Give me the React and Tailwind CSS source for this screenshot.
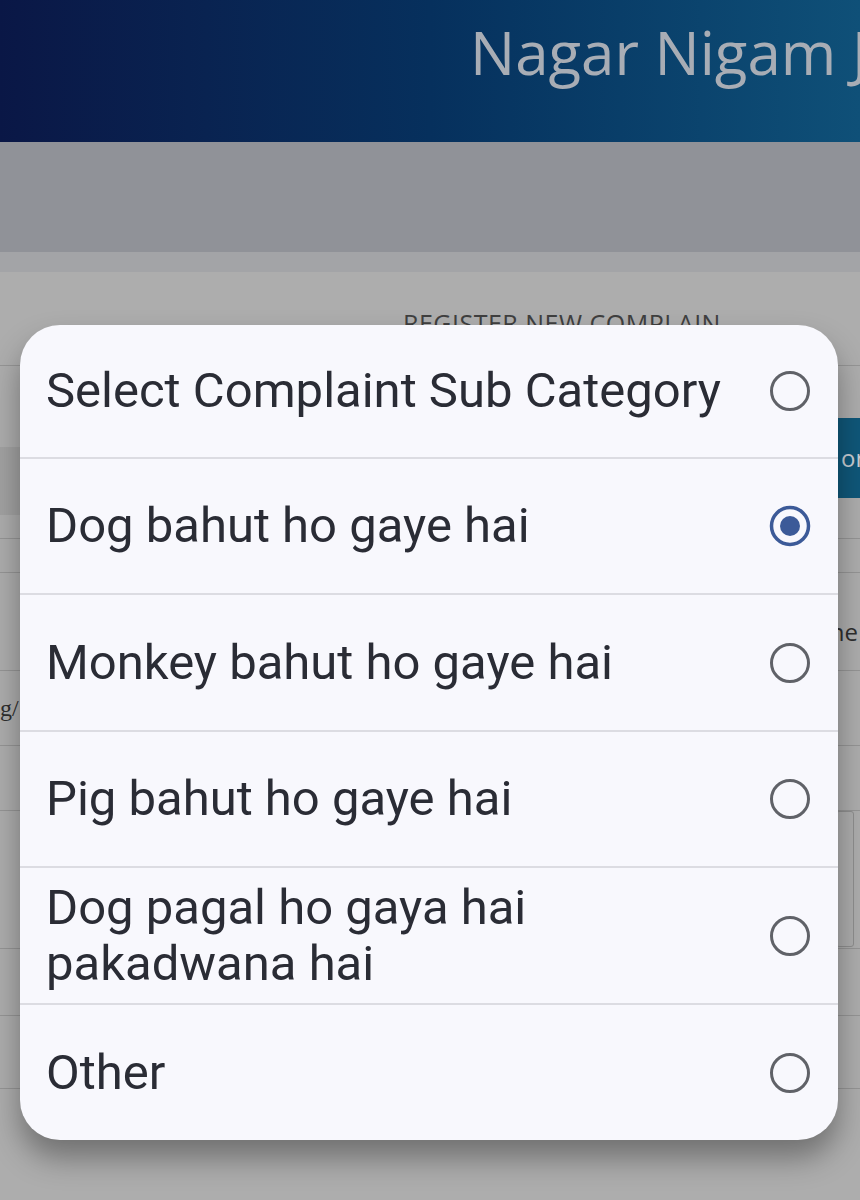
import React from 'react';

const options = [
  { label: 'Select Complaint Sub Category', h: 'h-[134px]' },
  { label: 'Dog bahut ho gaye hai', h: 'h-[136px]', checked: true },
  { label: 'Monkey bahut ho gaye hai', h: 'h-[137px]' },
  { label: 'Pig bahut ho gaye hai', h: 'h-[136px]' },
  { label: 'Dog pagal ho gaya hai pakadwana hai', h: 'h-[137px]' },
  { label: 'Other', h: 'h-[135px]' },
];

const Radio = ({ checked }) =>
  checked ? (
    <svg width="44" height="44" viewBox="0 0 44 44" className="shrink-0">
      <circle cx="22" cy="22" r="18.5" fill="none" stroke="#3c5a98" strokeWidth="3.5" />
      <circle cx="22" cy="22" r="10" fill="#3c5a98" />
    </svg>
  ) : (
    <svg width="44" height="44" viewBox="0 0 44 44" className="shrink-0">
      <circle cx="22" cy="22" r="18.5" fill="none" stroke="#606268" strokeWidth="3" />
    </svg>
  );

export default function App() {
  return (
    <div
      className="relative w-[860px] h-[1200px] overflow-hidden bg-[#adadad]"
      style={{ fontFamily: '"Open Sans", sans-serif' }}
    >
      {/* Header (dimmed behind the sheet) */}
      <header className="h-[142px] overflow-hidden bg-gradient-to-r from-[#0a1746] via-[#06305d] to-[#0f5078] pl-[470px] pt-[12px]">
        <h1 className="whitespace-nowrap text-[60px] leading-[80px] text-[#a8adb5]">Nagar Nigam Jabalpur</h1>
      </header>
      <div className="h-[110px] bg-[#909298]" />
      <div className="h-[20px] bg-[#a3a4a7]" />

      {/* Form behind the overlay */}
      <div className="h-[94px] border-b border-[#959595] pt-[36px]">
        <p className="pl-[403px] text-[25px] leading-[30px] tracking-[0.5px] text-[#3f3f3f] whitespace-nowrap">
          REGISTER NEW COMPLAIN
        </p>
      </div>
      <div className="flex h-[173px] border-b border-[#959595]">
        <div className="flex-1 flex flex-col">
          <div className="h-[81px]" />
          <div className="h-[68px] bg-[#a2a2a2]" />
        </div>
        <div className="w-[22px] flex flex-col">
          <div className="h-[52px]" />
          <div className="h-[80px] bg-[#0f5779] text-[#c8cdd3] text-[24px] leading-[80px] pl-[3px] whitespace-nowrap overflow-hidden">or</div>
        </div>
      </div>
      <div className="h-[34px] border-b border-[#959595]" />
      <div className="h-[98px] border-b border-[#959595] flex justify-end pt-[44px]">
        <span className="text-[24px] leading-[30px] text-[#2e2e2e] pr-[2px]">ne</span>
      </div>
      <div className="h-[75px] border-b border-[#959595] flex items-center">
        <span className="text-[24px] text-[#2e2e2e]" style={{ fontFamily: '"Liberation Serif", serif' }}>g/</span>
      </div>
      <div className="h-[65px] border-b border-[#959595]" />
      <div className="h-[138px] border-b border-[#959595] flex justify-end">
        <div className="w-[18px] h-[136px] mr-[6px] border border-[#8f8f8f] rounded-[3px]" />
      </div>
      <div className="h-[67px] border-b border-[#959595]" />
      <div className="h-[73px] border-b border-[#959595]" />

      {/* Sub category picker */}
      <div className="absolute left-[20px] top-[325px] w-[818px] h-[815px] rounded-[40px] bg-[#f8f8fd] overflow-hidden shadow-[0_18px_30px_rgba(0,0,0,0.35)]">
        {options.map((o, i) => (
          <div
            key={o.label}
            className={`${o.h} flex items-center pl-[26px] pr-[26px] ${i < options.length - 1 ? 'border-b-2 border-[#dcdce2]' : ''}`}
          >
            <span
              className="flex-1 pr-[16px] text-[49px] leading-[56px] text-[#2a2c35]"
              style={{ fontFamily: 'Roboto, sans-serif' }}
            >
              {o.label}
            </span>
            <Radio checked={o.checked} />
          </div>
        ))}
      </div>
    </div>
  );
}
